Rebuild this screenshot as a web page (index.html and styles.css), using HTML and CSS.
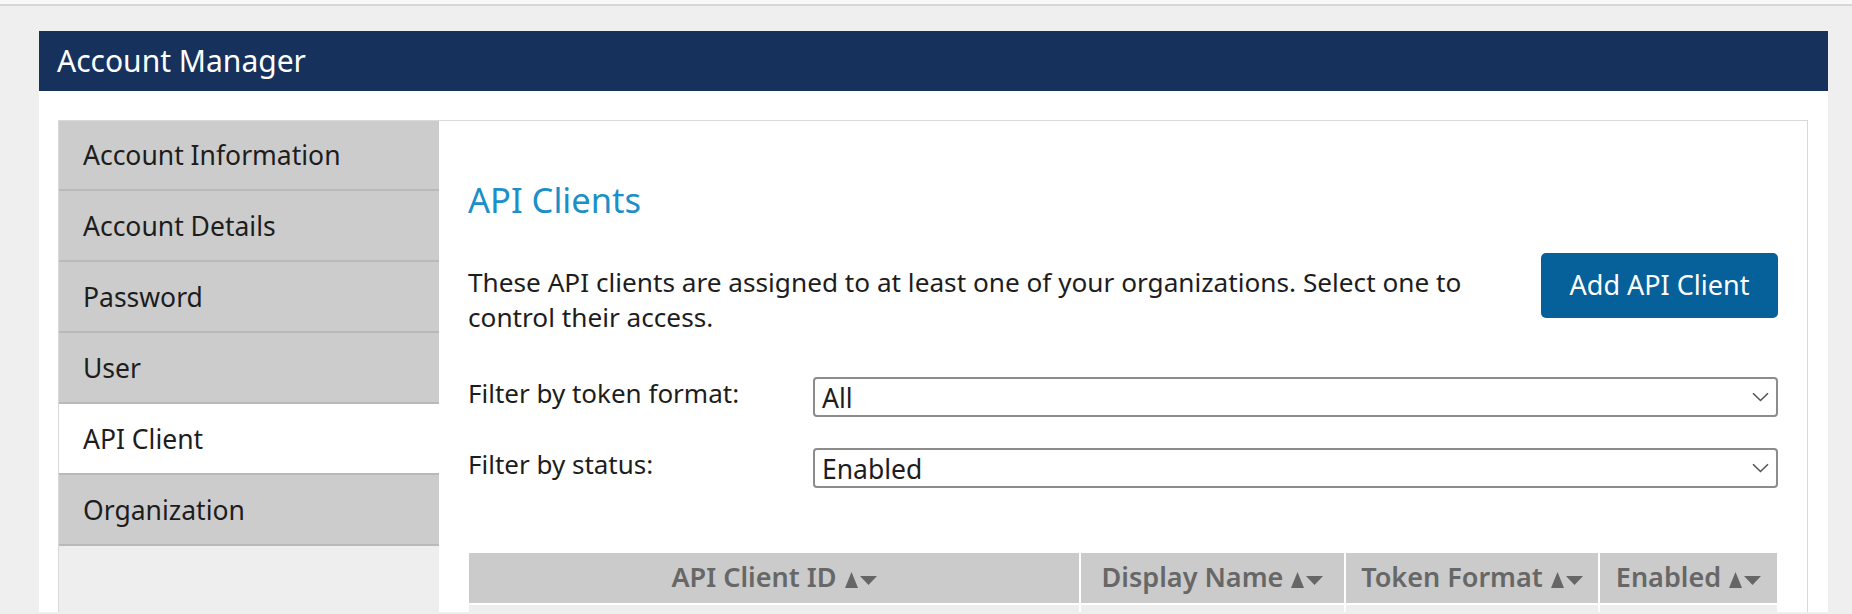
FILE: index.html
```html
<!DOCTYPE html>
<html lang="en">
<head>
<meta charset="utf-8">
<title>Account Manager</title>
<link rel="stylesheet" href="styles.css">
</head>
<body>
<div class="topline"></div>
<div class="page">
  <div class="header">Account Manager</div>
  <div class="card">
    <div class="box">
      <nav class="sidebar">
        <div class="nav-item">Account Information</div>
        <div class="nav-item">Account Details</div>
        <div class="nav-item">Password</div>
        <div class="nav-item">User</div>
        <div class="nav-item active">API Client</div>
        <div class="nav-item">Organization</div>
      </nav>
      <main class="main">
        <h1 class="title">API Clients</h1>
        <div class="intro">
          <p class="intro-text">These API clients are assigned to at least one of your organizations. Select one to control their access.</p>
          <button class="btn-primary">Add API Client</button>
        </div>
        <div class="filter">
          <label class="filter-label">Filter by token format:</label>
          <div class="select"><span>All</span><svg class="chev" viewBox="0 0 17 10" width="17" height="10"><path d="M1 1.2 L8.5 8.5 L16 1.2" fill="none" stroke="#555" stroke-width="1.6"/></svg></div>
        </div>
        <div class="filter">
          <label class="filter-label">Filter by status:</label>
          <div class="select"><span>Enabled</span><svg class="chev" viewBox="0 0 17 10" width="17" height="10"><path d="M1 1.2 L8.5 8.5 L16 1.2" fill="none" stroke="#555" stroke-width="1.6"/></svg></div>
        </div>
        <div class="table">
          <div class="th">API Client ID <svg class="sort" viewBox="0 0 32 16" width="32" height="16"><path d="M0 16 L6.5 0 L13 16 Z" fill="#666"/><path d="M15 4 L32 4 L23.5 13 Z" fill="#666"/></svg></div>
          <div class="th">Display Name <svg class="sort" viewBox="0 0 32 16" width="32" height="16"><path d="M0 16 L6.5 0 L13 16 Z" fill="#666"/><path d="M15 4 L32 4 L23.5 13 Z" fill="#666"/></svg></div>
          <div class="th">Token Format <svg class="sort" viewBox="0 0 32 16" width="32" height="16"><path d="M0 16 L6.5 0 L13 16 Z" fill="#666"/><path d="M15 4 L32 4 L23.5 13 Z" fill="#666"/></svg></div>
          <div class="th">Enabled <svg class="sort" viewBox="0 0 32 16" width="32" height="16"><path d="M0 16 L6.5 0 L13 16 Z" fill="#666"/><path d="M15 4 L32 4 L23.5 13 Z" fill="#666"/></svg></div>
          <div class="td"></div>
          <div class="td"></div>
          <div class="td"></div>
          <div class="td"></div>
        </div>
      </main>
    </div>
  </div>
</div>
</body>
</html>
```
FILE: styles.css
```css
* { box-sizing: border-box; }
html, body { height: 100%; }
body {
  margin: 0;
  background: #efefef;
  font-family: "Noto Sans", "Open Sans", "Liberation Sans", sans-serif;
  color: #1d1d1d;
  overflow: hidden;
}
.topline {
  height: 6px;
  background: #f8f8f8;
  border-bottom: 2px solid #d6d6d6;
}
.page {
  padding: 25px 24px 0 39px;
}
.header {
  height: 60px;
  background: #16325c;
  color: #fff;
  font-size: 30px;
  display: flex;
  align-items: center;
  padding-left: 18px;
  padding-bottom: 2px;
}
.card {
  background: #fff;
  padding: 29px 20px 0 19px;
  height: calc(100vh - 93px);
}
.box {
  display: flex;
  border: 1px solid #d9d9d9;
  border-bottom: 0;
  height: 100%;
  overflow: hidden;
}
.sidebar {
  width: 381px;
  flex: none;
  background: #eeeeee;
  margin: -1px 0 0 -1px;
}
.nav-item {
  height: 71px;
  padding-left: 25px;
  font-size: 26.5px;
  display: flex;
  align-items: center;
  background: #cccccc;
  border-bottom: 2px solid #b9b9b9;
  color: #1d1d1d;
}
.nav-item.active {
  background: #ffffff;
}
.main {
  flex: 1;
  padding: 59px 29px 0 29px;
}
.title {
  margin: 0;
  font-weight: 400;
  font-size: 34.5px;
  line-height: 40px;
  color: #1a8fc8;
}
.intro {
  display: flex;
  justify-content: space-between;
  align-items: flex-start;
  margin-top: 33px;
}
.intro-text {
  margin: 12px 0 0 0;
  width: 1030px;
  font-size: 26.2px;
  line-height: 35px;
}
.btn-primary {
  width: 237px;
  height: 65px;
  border: 0;
  border-radius: 5px;
  background: #06609a;
  color: #fff;
  font-family: inherit;
  font-size: 27px;
  padding: 0 0 2px 0;
}
.filter {
  display: flex;
  align-items: center;
  margin-top: 28px;
}
.intro + .filter { margin-top: 40px; }
.filter-label {
  width: 345px;
  flex: none;
  font-size: 26px;
  padding-bottom: 7px;
}
.select {
  flex: 1;
  height: 40px;
  border: 2px solid #8c8c8c;
  border-radius: 4px;
  display: flex;
  align-items: center;
  justify-content: space-between;
  padding: 0 7px 0 7px;
  font-size: 26.5px;
  color: #1d1d1d;
}
.select span { margin-top: 2px; }
.chev { display: block; }
.table {
  margin-top: 64px;
  display: grid;
  grid-template-columns: 610px 263px 252px 1fr;
  column-gap: 2px;
  row-gap: 2px;
  margin-left: 1px;
  margin-right: 1px;
}
.th {
  height: 50px;
  background: #cbcbcb;
  color: #676767;
  font-weight: 600;
  font-size: 27px;
  line-height: 48px;
  text-align: center;
  white-space: nowrap;
}
.sort {
  display: inline-block;
  vertical-align: -1px;
  margin-left: 1px;
}
.td {
  height: 60px;
  background: #eeeeee;
}
```
